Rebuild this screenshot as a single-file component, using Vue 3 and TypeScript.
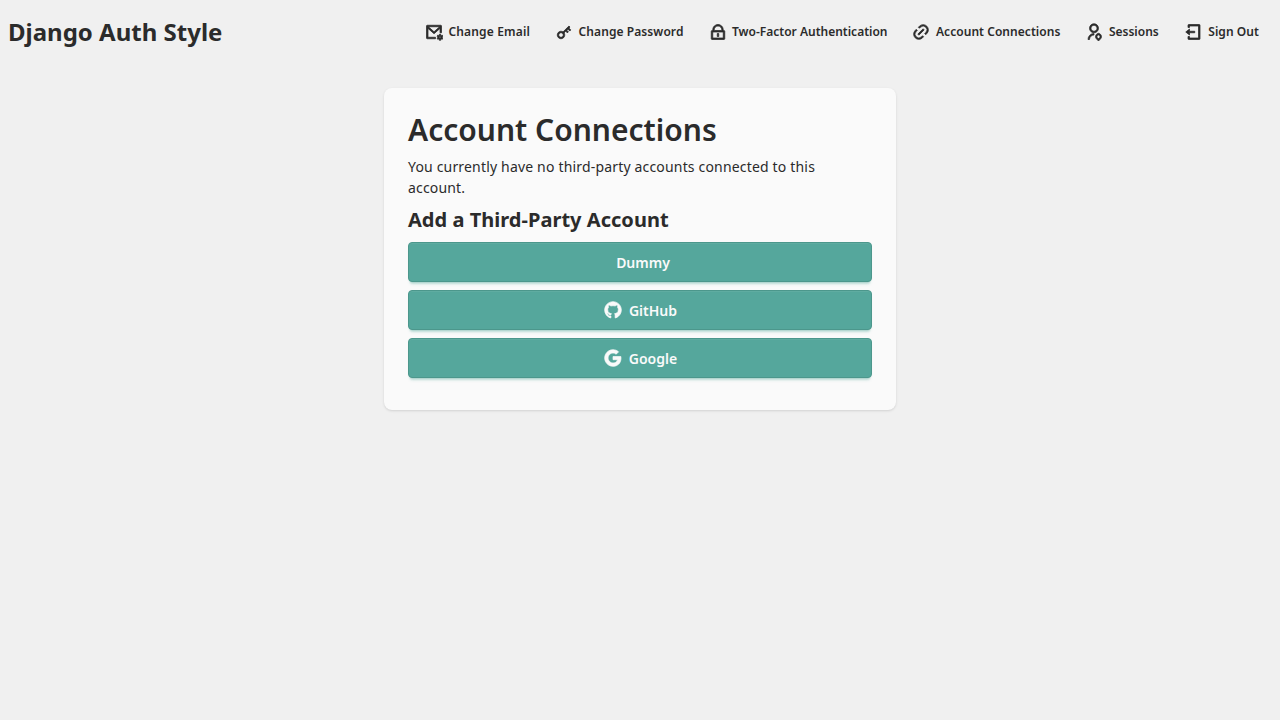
<script setup lang="ts">
interface NavItem {
  label: string
  icon: string
  slug: string
}

interface Provider {
  name: string
  icon?: string
}

const navItems: NavItem[] = [
  {
    label: 'Change Email',
    slug: 'email',
    icon: 'M22 13H20V7.238L12.072 14.338L4 7.216V19H14V21H3a1 1 0 0 1-1-1V4a1 1 0 0 1 1-1H21a1 1 0 0 1 1 1V13ZM4.511 5L12.062 11.662L19.501 5H4.511ZM17.05 19.548a3.017 3.017 0 0 1 0-1.096l-1.014-.586 1-1.732 1.014.586c.278-.238.599-.425.95-.55V15h2v1.17c.351.125.672.312.95.55l1.014-.586 1 1.732-1.014.586a3.017 3.017 0 0 1 0 1.096l1.014.586-1 1.732-1.014-.586a2.997 2.997 0 0 1-.95.55V23h-2v-1.17a2.997 2.997 0 0 1-.95-.55l-1.014.586-1-1.732 1.014-.586zM20 20a1 1 0 1 0 0-2 1 1 0 0 0 0 2z',
  },
  {
    label: 'Change Password',
    slug: 'password',
    icon: 'M10.7577 11.8281L18.6066 3.97919L20.0208 5.3934L18.6066 6.80761L21.0815 9.28249L19.6673 10.6967L17.1924 8.22183L15.7782 9.63604L17.8995 11.7574L16.4853 13.1716L14.364 11.0503L12.1719 13.2423C13.4581 15.1837 13.246 17.8251 11.5355 19.5355C9.58291 21.4882 6.41709 21.4882 4.46447 19.5355C2.51184 17.5829 2.51184 14.4171 4.46447 12.4645C6.17493 10.754 8.81633 10.5419 10.7577 11.8281ZM10.1213 18.1213C11.2929 16.9497 11.2929 15.0503 10.1213 13.8787C8.94975 12.7071 7.05025 12.7071 5.87868 13.8787C4.70711 15.0503 4.70711 16.9497 5.87868 18.1213C7.05025 19.2929 8.94975 19.2929 10.1213 18.1213Z',
  },
  {
    label: 'Two-Factor Authentication',
    slug: 'two-factor',
    icon: 'M19 10H20C20.5523 10 21 10.4477 21 11V21C21 21.5523 20.5523 22 20 22H4C3.44772 22 3 21.5523 3 21V11C3 10.4477 3.44772 10 4 10H5V9C5 5.13401 8.13401 2 12 2C15.866 2 19 5.13401 19 9V10ZM5 12V20H19V12H5ZM11 14H13V18H11V14ZM17 10V9C17 6.23858 14.7614 4 12 4C9.23858 4 7 6.23858 7 9V10H17Z',
  },
  {
    label: 'Account Connections',
    slug: 'connections',
    icon: 'M18.364 15.536L16.95 14.12l1.414-1.414a5 5 0 1 0-7.071-7.071L9.879 7.05 8.464 5.636 9.88 4.222a7 7 0 0 1 9.9 9.9l-1.415 1.414zm-2.828 2.828l-1.415 1.414a7 7 0 0 1-9.9-9.9l1.415-1.414L7.05 9.88l-1.414 1.414a5 5 0 1 0 7.071 7.071l1.414-1.414 1.415 1.414zm-.708-10.607l1.415 1.415-7.071 7.07-1.415-1.414 7.071-7.07z',
  },
  {
    label: 'Sessions',
    slug: 'sessions',
    icon: 'M12 14v2a6 6 0 0 0-6 6H4a8 8 0 0 1 8-8zm0-1c-3.315 0-6-2.685-6-6s2.685-6 6-6 6 2.685 6 6-2.685 6-6 6zm0-2c2.21 0 4-1.79 4-4s-1.79-4-4-4-4 1.79-4 4 1.79 4 4 4zm8.828 10.071L18 24l-2.828-2.929c-1.563-1.618-1.563-4.24 0-5.858a3.904 3.904 0 0 1 5.656 0c1.563 1.618 1.563 4.24 0 5.858zm-1.438-1.39c.813-.842.813-2.236 0-3.078a1.904 1.904 0 0 0-2.78 0c-.813.842-.813 2.236 0 3.079L18 21.12l1.39-1.44z',
  },
  {
    label: 'Sign Out',
    slug: 'sign-out',
    icon: 'M4 18H6V20H18V4H6V6H4V3a1 1 0 0 1 1-1H19a1 1 0 0 1 1 1V21a1 1 0 0 1-1 1H5a1 1 0 0 1-1-1V18ZM6 11H13V13H6V16L1 12L6 8V11Z',
  },
]

const providers: Provider[] = [
  { name: 'Dummy' },
  {
    name: 'GitHub',
    icon: 'M12.001 2C6.47598 2 2.00098 6.475 2.00098 12C2.00098 16.425 4.86348 20.1625 8.83848 21.4875C9.33848 21.575 9.52598 21.275 9.52598 21.0125C9.52598 20.775 9.51348 19.9875 9.51348 19.15C7.00098 19.6125 6.35098 18.5375 6.15098 17.975C6.03848 17.6875 5.55098 16.8 5.12598 16.5625C4.77598 16.375 4.27598 15.9125 5.11348 15.9C5.90098 15.8875 6.46348 16.625 6.65098 16.925C7.55098 18.4375 8.98848 18.0125 9.56348 17.75C9.65098 17.1 9.91348 16.6625 10.201 16.4125C7.97598 16.1625 5.65098 15.3 5.65098 11.475C5.65098 10.3875 6.03848 9.4875 6.67598 8.7875C6.57598 8.5375 6.22598 7.5125 6.77598 6.1375C6.77598 6.1375 7.61348 5.875 9.52598 7.1625C10.326 6.9375 11.176 6.825 12.026 6.825C12.876 6.825 13.726 6.9375 14.526 7.1625C16.4385 5.8625 17.276 6.1375 17.276 6.1375C17.826 7.5125 17.476 8.5375 17.376 8.7875C18.0135 9.4875 18.401 10.375 18.401 11.475C18.401 15.3125 16.0635 16.1625 13.8385 16.4125C14.201 16.725 14.5135 17.325 14.5135 18.2625C14.5135 19.6 14.501 20.675 14.501 21.0125C14.501 21.275 14.6885 21.5875 15.1885 21.4875C19.259 20.1133 21.9999 16.2963 22.001 12C22.001 6.475 17.526 2 12.001 2Z',
  },
  {
    name: 'Google',
    icon: 'M3.06364 7.50914C4.70909 4.24092 8.09084 2 12 2C14.6954 2 16.959 2.99095 18.6909 4.60455L15.8227 7.47274C14.7864 6.48185 13.4681 5.97727 12 5.97727C9.39542 5.97727 7.19084 7.73637 6.40455 10.1C6.2045 10.7 6.09086 11.3409 6.09086 12C6.09086 12.6591 6.2045 13.3 6.40455 13.9C7.19084 16.2636 9.39542 18.0227 12 18.0227C13.3454 18.0227 14.4909 17.6682 15.3864 17.0682C16.4454 16.3591 17.15 15.3 17.3818 14.05H12V10.1818H21.4181C21.5364 10.8363 21.6 11.5182 21.6 12.2273C21.6 15.2727 20.5091 17.8363 18.6181 19.5773C16.9636 21.1046 14.7 22 12 22C8.09084 22 4.70909 19.7591 3.06364 16.4909C2.38638 15.1409 2 13.6136 2 12C2 10.3864 2.38638 8.85911 3.06364 7.50914Z',
  },
]
</script>

<template>
  <div class="page">
    <header class="topbar">
      <a class="brand">Django Auth Style</a>
      <nav class="nav">
        <a v-for="item in navItems" :key="item.slug" class="nav-link" :class="item.slug">
          <svg class="nav-icon" viewBox="0 0 24 24" aria-hidden="true"><path :d="item.icon" /></svg>
          <span>{{ item.label }}</span>
        </a>
      </nav>
    </header>
    <main class="card">
      <h1 class="title">Account Connections</h1>
      <p class="message">You currently have no third-party accounts connected to this account.</p>
      <h2 class="subtitle">Add a Third-Party Account</h2>
      <div class="providers">
        <button v-for="provider in providers" :key="provider.name" class="provider" type="button">
          <span class="provider-mark">
            <svg v-if="provider.icon" class="provider-icon" viewBox="0 0 24 24" aria-hidden="true">
              <path :d="provider.icon" />
            </svg>
          </span>
          <span class="provider-name">{{ provider.name }}</span>
        </button>
      </div>
    </main>
  </div>
</template>

<style>
body {
  background: #f0f0f0;
}
</style>

<style scoped>
.page {
  min-height: 100vh;
  color: #2b2b2b;
  font-family: 'Noto Sans', sans-serif;
  font-size: 14px;
  line-height: 21px;
}
.topbar {
  display: flex;
  align-items: center;
  justify-content: space-between;
  height: 64px;
  padding: 0 8px;
}
.brand {
  font-size: 24px;
  line-height: 32px;
  font-weight: 700;
}
.nav {
  display: flex;
}
.nav-link {
  display: flex;
  align-items: center;
  gap: 5.5px;
  padding: 0 12px 0 13px;
  font-size: 12px;
  line-height: 16px;
  font-weight: 600;
  white-space: nowrap;
}
.nav-link.email {
  letter-spacing: 0.17px;
}
.nav-link.password {
  letter-spacing: 0.08px;
}
.nav-link.connections {
  letter-spacing: 0.05px;
}
.nav-link.sessions {
  padding-right: 13px;
}
.nav-link.sign-out {
  padding-right: 13px;
  letter-spacing: 0.06px;
}
.nav-icon {
  width: 18px;
  height: 18px;
  fill: currentColor;
  stroke: currentColor;
  stroke-width: 1;
}
.card {
  box-sizing: border-box;
  width: 512px;
  height: 322px;
  margin: 24px auto 0;
  padding: 24px;
  border-radius: 8px;
  background: #fafafa;
  box-shadow: 0 1px 3px rgba(0, 0, 0, 0.1), 0 1px 2px -1px rgba(0, 0, 0, 0.1);
}
.title {
  margin: 0 0 8px;
  font-size: 30px;
  line-height: 36px;
  font-weight: 600;
}
.message {
  margin: 0 0 8px;
  letter-spacing: 0.175px;
}
.subtitle {
  margin: 0 0 8px;
  font-size: 20px;
  line-height: 28px;
  font-weight: 700;
  letter-spacing: 0.03px;
}
.providers {
  display: flex;
  flex-direction: column;
  gap: 8px;
}
.provider {
  display: flex;
  align-items: center;
  justify-content: center;
  gap: 6px;
  box-sizing: border-box;
  height: 40px;
  padding: 0 16px;
  border: 1px solid #4c978c;
  border-radius: 4px;
  background: #55a79c;
  color: #fafafa;
  font: 600 14px/20px 'Noto Sans', sans-serif;
  box-shadow: inset 0 1px 0 rgba(255, 255, 255, 0.06), 0 3px 2px -2px rgba(85, 168, 157, 0.3), 0 4px 3px -2px rgba(85, 168, 157, 0.3);
}
.provider-mark {
  display: flex;
  padding-bottom: 1px;
}
.provider-icon {
  width: 20px;
  height: 20px;
  fill: currentColor;
  stroke: currentColor;
  stroke-width: 0.8;
}
.provider-name {
  padding-top: 2px;
}
</style>
